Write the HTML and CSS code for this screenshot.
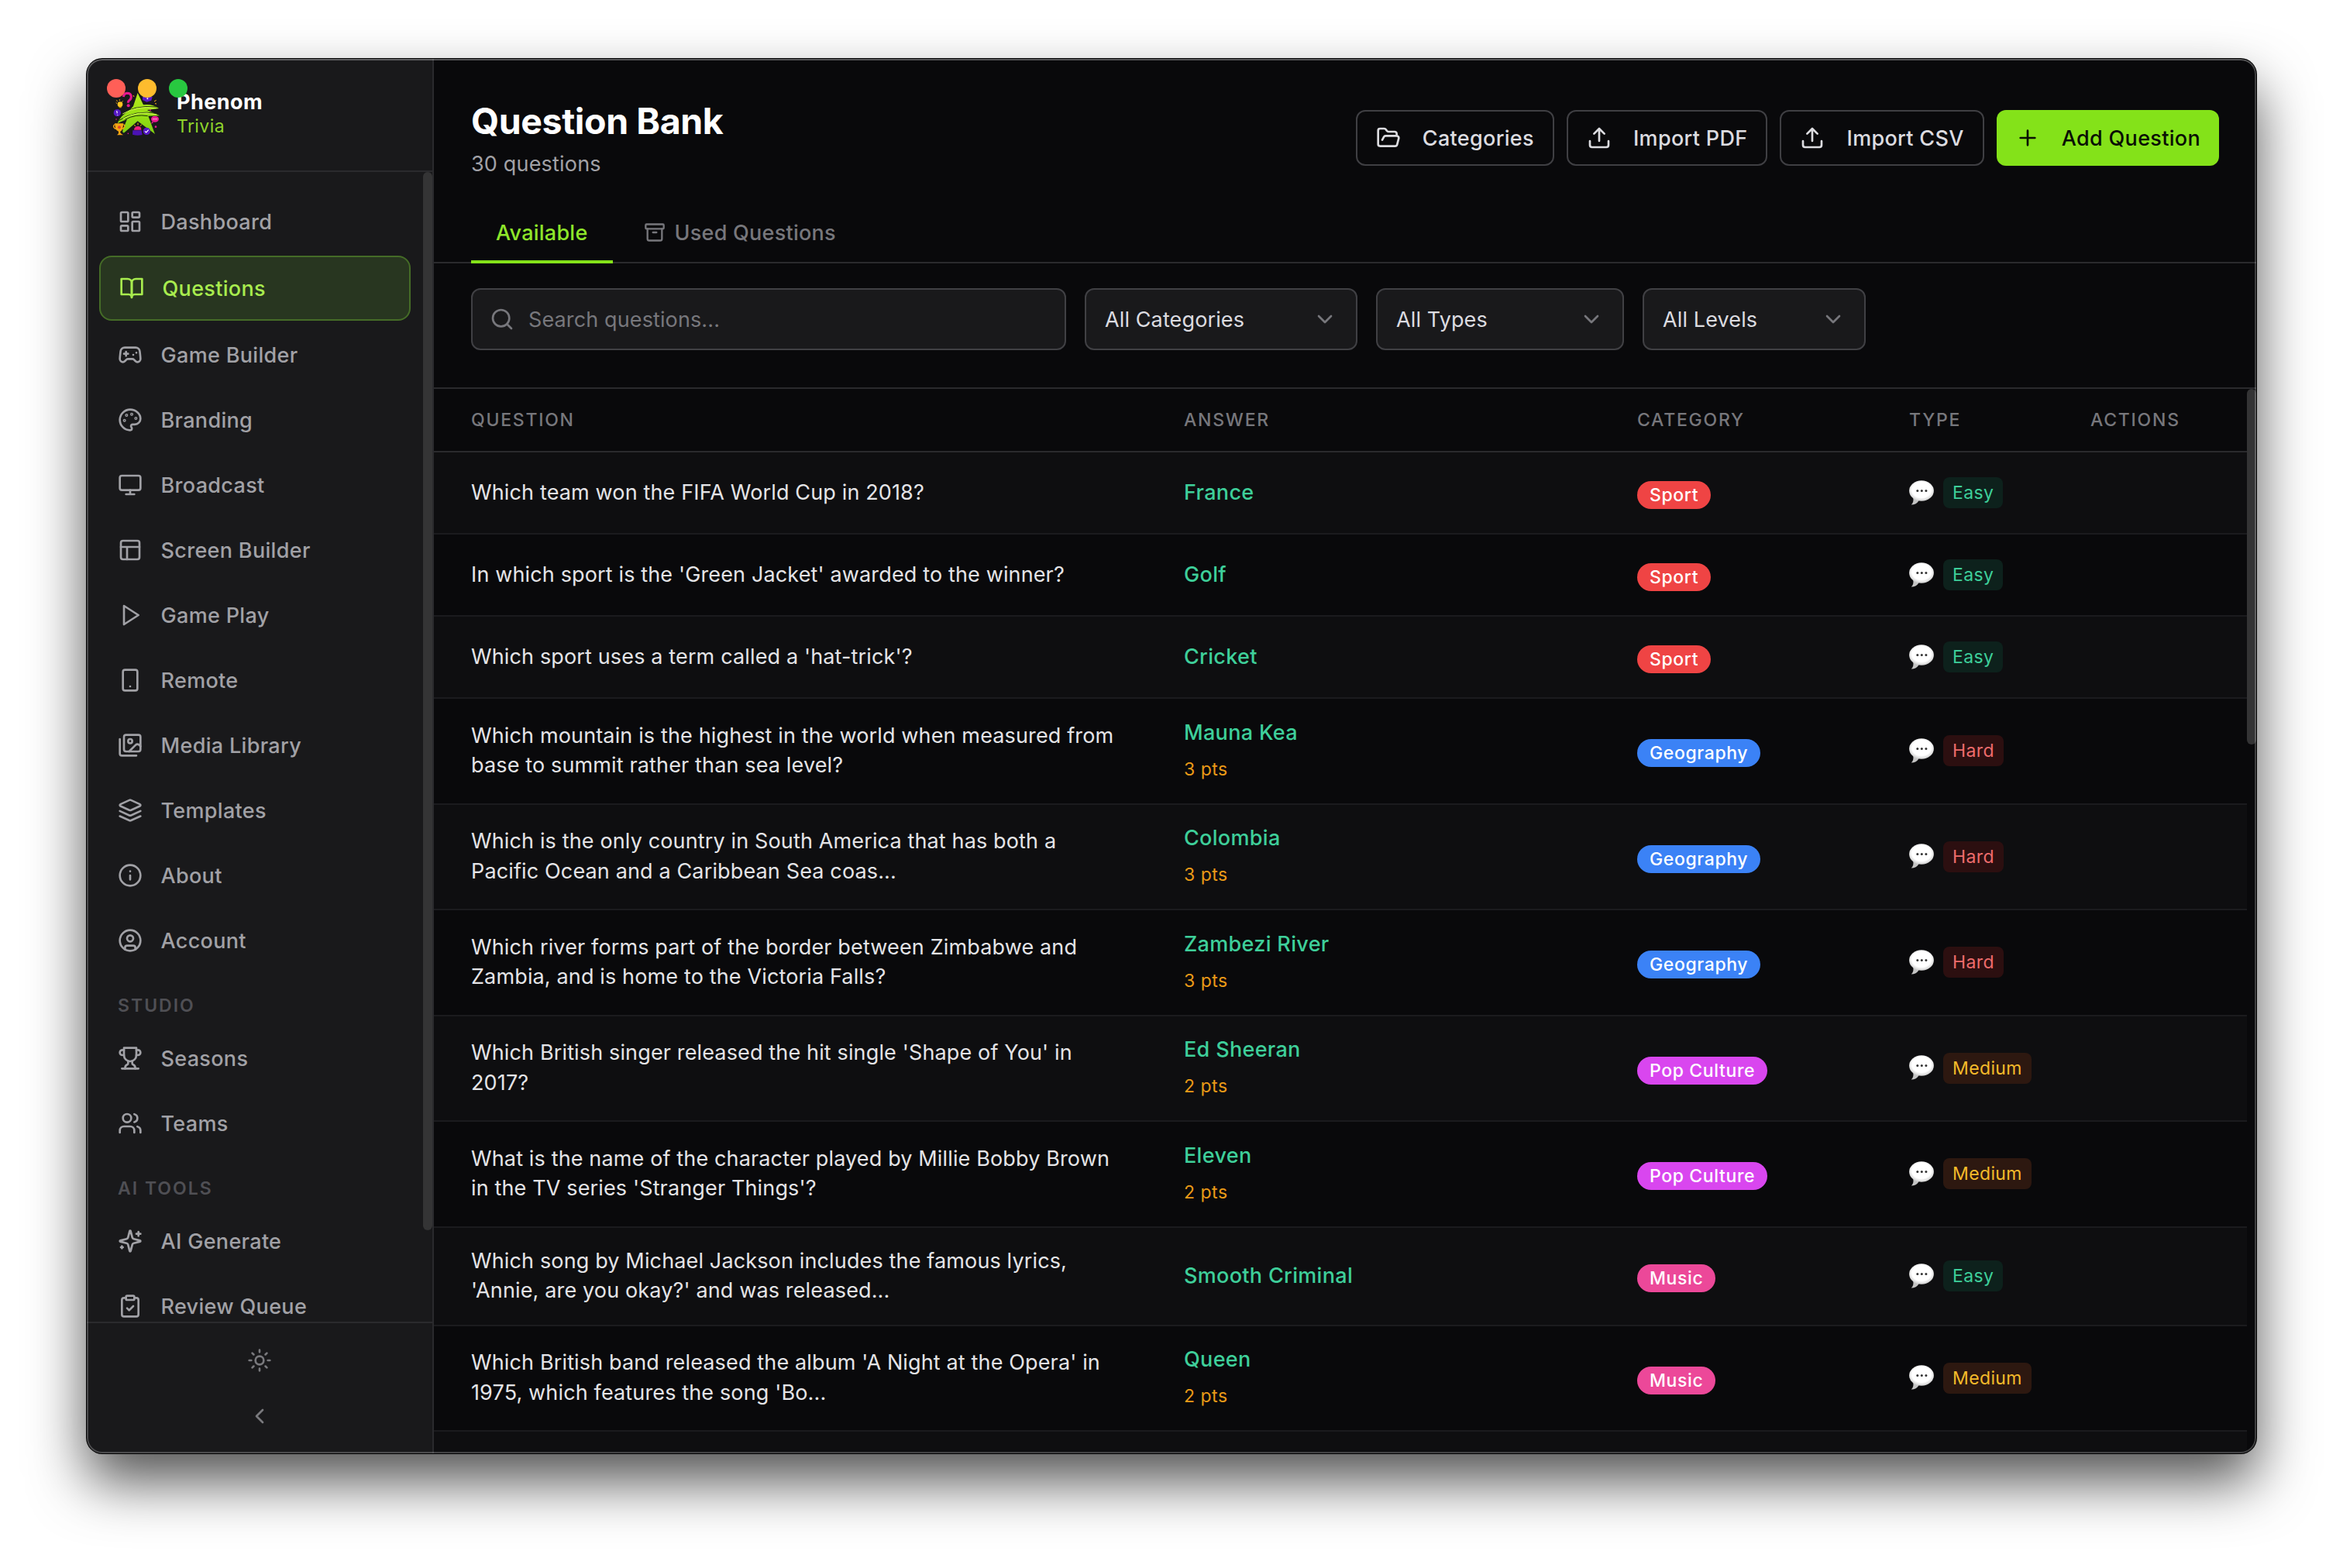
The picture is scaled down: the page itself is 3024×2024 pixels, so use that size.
FILE: index.html
```html
<!DOCTYPE html>
<html lang="en">
<head>
<meta charset="utf-8">
<title>Phenom Trivia – Question Bank</title>
<link rel="stylesheet" href="styles.css">
</head>
<body>
<svg class="sprite" aria-hidden="true">
  <symbol id="dashboard" viewBox="0 0 24 24"><rect x="3" y="3" width="7" height="9" rx="1"/><rect x="14" y="3" width="7" height="5" rx="1"/><rect x="14" y="12" width="7" height="9" rx="1"/><rect x="3" y="16" width="7" height="5" rx="1"/></symbol>
  <symbol id="book" viewBox="0 0 24 24"><path d="M2 3h6a4 4 0 0 1 4 4v14a3 3 0 0 0-3-3H2z"/><path d="M22 3h-6a4 4 0 0 0-4 4v14a3 3 0 0 1 3-3h7z"/></symbol>
  <symbol id="gamepad" viewBox="0 0 24 24"><path d="M6 11h4M8 9v4M15 12h.01M18 10h.01"/><path d="M17.32 5H6.68a4 4 0 0 0-3.978 3.59c-.006.052-.01.101-.017.152C2.604 9.416 2 14.456 2 16a3 3 0 0 0 3 3c1 0 1.5-.5 2-1l1.414-1.414A2 2 0 0 1 9.828 16h4.344a2 2 0 0 1 1.414.586L17 18c.5.5 1 1 2 1a3 3 0 0 0 3-3c0-1.545-.604-6.584-.685-7.258-.007-.05-.011-.1-.017-.151A4 4 0 0 0 17.32 5z"/></symbol>
  <symbol id="palette" viewBox="0 0 24 24"><circle cx="13.5" cy="6.5" r=".5"/><circle cx="17.5" cy="10.5" r=".5"/><circle cx="8.5" cy="7.5" r=".5"/><circle cx="6.5" cy="12.5" r=".5"/><path d="M12 2C6.5 2 2 6.5 2 12s4.5 10 10 10c.926 0 1.648-.746 1.648-1.688 0-.437-.18-.835-.437-1.125-.29-.289-.438-.652-.438-1.125a1.64 1.64 0 0 1 1.668-1.668h1.996c3.051 0 5.555-2.503 5.555-5.554C21.965 6.012 17.461 2 12 2z"/></symbol>
  <symbol id="monitor" viewBox="0 0 24 24"><rect x="2" y="3" width="20" height="14" rx="2"/><path d="M8 21h8M12 17v4"/></symbol>
  <symbol id="layout" viewBox="0 0 24 24"><rect x="3" y="3" width="18" height="18" rx="2"/><path d="M3 9h18M9 21V9"/></symbol>
  <symbol id="play" viewBox="0 0 24 24"><path d="M6 3l14 9-14 9z"/></symbol>
  <symbol id="phone" viewBox="0 0 24 24"><rect x="5" y="2" width="14" height="20" rx="2"/><path d="M12 18h.01"/></symbol>
  <symbol id="images" viewBox="0 0 24 24"><path d="M18 22H4a2 2 0 0 1-2-2V6"/><path d="m22 13-1.296-1.296a2.41 2.41 0 0 0-3.408 0L11 18"/><circle cx="12" cy="8" r="2"/><rect x="6" y="2" width="16" height="16" rx="2"/></symbol>
  <symbol id="layers" viewBox="0 0 24 24"><path d="m12.83 2.18a2 2 0 0 0-1.66 0L2.6 6.08a1 1 0 0 0 0 1.83l8.58 3.91a2 2 0 0 0 1.66 0l8.58-3.9a1 1 0 0 0 0-1.83Z"/><path d="m22 17.65-9.17 4.16a2 2 0 0 1-1.66 0L2 17.65"/><path d="m22 12.65-9.17 4.16a2 2 0 0 1-1.66 0L2 12.65"/></symbol>
  <symbol id="info" viewBox="0 0 24 24"><circle cx="12" cy="12" r="10"/><path d="M12 16v-4M12 8h.01"/></symbol>
  <symbol id="user" viewBox="0 0 24 24"><circle cx="12" cy="12" r="10"/><circle cx="12" cy="10" r="3"/><path d="M7 20.662V19a2 2 0 0 1 2-2h6a2 2 0 0 1 2 2v1.662"/></symbol>
  <symbol id="trophy" viewBox="0 0 24 24"><path d="M6 9H4.5a2.5 2.5 0 0 1 0-5H6M18 9h1.5a2.5 2.5 0 0 0 0-5H18M4 22h16"/><path d="M10 14.66V17c0 .55-.47.98-.97 1.21C7.85 18.75 7 20.24 7 22M14 14.66V17c0 .55.47.98.97 1.21C16.15 18.75 17 20.24 17 22"/><path d="M18 2H6v7a6 6 0 0 0 12 0V2Z"/></symbol>
  <symbol id="users" viewBox="0 0 24 24"><path d="M16 21v-2a4 4 0 0 0-4-4H6a4 4 0 0 0-4 4v2"/><circle cx="9" cy="7" r="4"/><path d="M22 21v-2a4 4 0 0 0-3-3.87M16 3.13a4 4 0 0 1 0 7.75"/></symbol>
  <symbol id="sparkles" viewBox="0 0 24 24"><path d="M9.937 15.5A2 2 0 0 0 8.5 14.063l-6.135-1.582a.5.5 0 0 1 0-.962L8.5 9.936A2 2 0 0 0 9.937 8.5l1.582-6.135a.5.5 0 0 1 .963 0L14.063 8.5A2 2 0 0 0 15.5 9.937l6.135 1.581a.5.5 0 0 1 0 .964L15.5 14.063a2 2 0 0 0-1.437 1.437l-1.582 6.135a.5.5 0 0 1-.963 0z"/><path d="M20 3v4M22 5h-4M4 17v2M5 18H3"/></symbol>
  <symbol id="clipboard" viewBox="0 0 24 24"><rect x="8" y="2" width="8" height="4" rx="1"/><path d="M16 4h2a2 2 0 0 1 2 2v14a2 2 0 0 1-2 2H6a2 2 0 0 1-2-2V6a2 2 0 0 1 2-2h2M9 14l2 2 4-4"/></symbol>
  <symbol id="sun" viewBox="0 0 24 24"><circle cx="12" cy="12" r="4"/><path d="M12 2v2M12 20v2M4.93 4.93l1.41 1.41M17.66 17.66l1.41 1.41M2 12h2M20 12h2M6.34 17.66l-1.41 1.41M19.07 4.93l-1.41 1.41"/></symbol>
  <symbol id="left" viewBox="0 0 24 24"><path d="m15 18-6-6 6-6"/></symbol>
  <symbol id="down" viewBox="0 0 24 24"><path d="m6 9 6 6 6-6"/></symbol>
  <symbol id="folder" viewBox="0 0 24 24"><path d="m6 14 1.5-2.9A2 2 0 0 1 9.24 10H20a2 2 0 0 1 1.94 2.5l-1.54 6a2 2 0 0 1-1.95 1.5H4a2 2 0 0 1-2-2V5a2 2 0 0 1 2-2h3.9a2 2 0 0 1 1.69.9l.81 1.2a2 2 0 0 0 1.67.9H18a2 2 0 0 1 2 2v2"/></symbol>
  <symbol id="upload" viewBox="0 0 24 24"><path d="M21 15v4a2 2 0 0 1-2 2H5a2 2 0 0 1-2-2v-4M17 8l-5-5-5 5M12 3v12"/></symbol>
  <symbol id="plus" viewBox="0 0 24 24"><path d="M5 12h14M12 5v14"/></symbol>
  <symbol id="archive" viewBox="0 0 24 24"><rect x="2" y="3" width="20" height="5" rx="1"/><path d="M4 8v11a2 2 0 0 0 2 2h12a2 2 0 0 0 2-2V8M10 12h4"/></symbol>
  <symbol id="search" viewBox="0 0 24 24"><circle cx="11" cy="11" r="8"/><path d="m21 21-4.3-4.3"/></symbol>
  <radialGradient id="bubbleFill" cx="50%" cy="45%" r="55%"><stop offset=".7" stop-color="#fff"/><stop offset="1" stop-color="#cfcfcf"/></radialGradient>
  <symbol id="bubble" viewBox="0 0 32 33"><path d="M5 22c1 4 .5 7-2.2 9.6 4.5-.2 7.800-2 9.700-5.400z" fill="#c4c4c4" stroke="none"/><ellipse cx="16" cy="13.500" rx="15.900" ry="13.200" fill="url(#bubbleFill)" stroke="none"/><g fill="#333" stroke="none"><circle cx="10.800" cy="13.600" r="1.500"/><circle cx="16.300" cy="13.600" r="1.500"/><circle cx="21.900" cy="13.600" r="1.500"/></g></symbol>
  <linearGradient id="starFill" x1="0" y1="0" x2="0" y2="1"><stop offset="0" stop-color="#b6ee1c"/><stop offset="1" stop-color="#7ed010"/></linearGradient>
</svg>

<div class="window">
  <div class="lights"><i class="red"></i><i class="yellow"></i><i class="green"></i></div>

  <aside class="sidebar">
    <div class="brand">
      <svg class="logo" viewBox="165 175 186 174">
        <path d="M208 196q2-13 14-14 15 0 16 13 0 10-8 15-4 3-4 9" fill="none" stroke="#e5178f" stroke-width="9"/><circle cx="227" cy="230" r="6" fill="#e5178f"/>
        <circle cx="195" cy="225" r="10" fill="#ffc51f"/><path d="M191 234h9v5h-9z" fill="#c98a10"/>
        <path d="M179 218l4 4M181 209l4 5M193 206v5M206 212l-4 4M246 190l3 6M327 214l8-5M330 222l6 1M250 304l4 6M264 297v8M278 303l-4 6" stroke="#ffb21a" stroke-width="3"/>
        <path d="M282 196h38l-4 14-18 6-16-8z" fill="#5a17c9"/><circle cx="301" cy="203" r="3" fill="#fff"/>
        <circle cx="184" cy="258" r="14" fill="#5418c4"/><path d="M182 250l2 10M185 265v2" stroke="#fff" stroke-width="3.500"/>
        <path d="M263 181l22 46q34-5 60 14l-46 6 49 22-44 1 26 70-67-50-52 45q-11 2-3-18l14-34q-22 8-37 16 10-30 45-49l16-18z" fill="url(#starFill)"/>
        <path d="M195 268q50-42 142-33M190 288q64-44 152-27M214 284q40-22 88-14" fill="none" stroke="#1c2f08" stroke-width="3"/>
        <path d="M205 262q56-34 130-22M206 281q60-34 130-16" fill="none" stroke="#d3f957" stroke-width="3"/>
        <ellipse cx="330" cy="282" rx="15" ry="12" fill="#ec1a93"/><circle cx="324" cy="282" r="2" fill="#fff"/><circle cx="330" cy="282" r="2" fill="#fff"/><circle cx="336" cy="282" r="2" fill="#fff"/>
        <path d="M319 292l-4 9 10-6z" fill="#ec1a93"/>
        <path d="M174 299h34l-3 20q-4 9-10 12l3 7 9 6h-24l6-6v-8q-9-3-12-12z" fill="#f5a514"/><path d="M175 303q-8 4-4 11t9 6M208 303q8 4 3 11t-8 6" fill="none" stroke="#f5a514" stroke-width="4"/><circle cx="192" cy="314" r="6" fill="#e0452a"/>
        <path d="M249 324q1-14 15-14t13 14z" fill="#f0207f"/><path d="M244 326h34l3 17q-20 5-38-1z" fill="#4b12b5"/>
        <circle cx="298" cy="329" r="14" fill="#5418c4"/><path d="M291 329l5 5 9-10" fill="none" stroke="#fff" stroke-width="3.500"/>
        <g fill="#e5178f"><circle cx="312" cy="247" r="3"/><circle cx="333" cy="312" r="4"/><circle cx="226" cy="338" r="2.500"/><circle cx="180" cy="283" r="2.500"/></g>
      </svg>
      <div class="brand-text"><div class="brand-name">Phenom</div><div class="brand-sub">Trivia</div></div>
    </div>

    <div class="nav-area">
      <nav class="nav">
        <a class="item"><svg class="icon"><use href="#dashboard"/></svg>Dashboard</a>
        <a class="item active"><svg class="icon"><use href="#book"/></svg>Questions</a>
        <a class="item"><svg class="icon"><use href="#gamepad"/></svg>Game Builder</a>
        <a class="item"><svg class="icon"><use href="#palette"/></svg>Branding</a>
        <a class="item"><svg class="icon"><use href="#monitor"/></svg>Broadcast</a>
        <a class="item"><svg class="icon"><use href="#layout"/></svg>Screen Builder</a>
        <a class="item"><svg class="icon"><use href="#play"/></svg>Game Play</a>
        <a class="item"><svg class="icon"><use href="#phone"/></svg>Remote</a>
        <a class="item"><svg class="icon"><use href="#images"/></svg>Media Library</a>
        <a class="item"><svg class="icon"><use href="#layers"/></svg>Templates</a>
        <a class="item"><svg class="icon"><use href="#info"/></svg>About</a>
        <a class="item"><svg class="icon"><use href="#user"/></svg>Account</a>
        <div class="section">STUDIO</div>
        <a class="item"><svg class="icon"><use href="#trophy"/></svg>Seasons</a>
        <a class="item"><svg class="icon"><use href="#users"/></svg>Teams</a>
        <div class="section">AI TOOLS</div>
        <a class="item"><svg class="icon"><use href="#sparkles"/></svg>AI Generate</a>
        <a class="item"><svg class="icon"><use href="#clipboard"/></svg>Review Queue</a>
      </nav>
      <div class="track"><div class="thumb nav-thumb"></div></div>
    </div>

    <div class="side-foot">
      <svg class="icon"><use href="#sun"/></svg>
      <svg class="icon"><use href="#left"/></svg>
    </div>
  </aside>

  <main class="main">
    <header class="head">
      <div>
        <h1 class="title">Question Bank</h1>
        <p class="count">30 questions</p>
      </div>
      <div class="actions">
        <button class="btn"><svg class="icon"><use href="#folder"/></svg>Categories</button>
        <button class="btn"><svg class="icon"><use href="#upload"/></svg>Import PDF</button>
        <button class="btn"><svg class="icon"><use href="#upload"/></svg>Import CSV</button>
        <button class="btn primary"><svg class="icon"><use href="#plus"/></svg>Add Question</button>
      </div>
    </header>

    <div class="tabs">
      <div class="tab selected">Available</div>
      <div class="tab"><svg class="icon small"><use href="#archive"/></svg>Used Questions</div>
    </div>

    <div class="filters">
      <div class="search"><svg class="icon"><use href="#search"/></svg>Search questions...</div>
      <div class="select w-cat">All Categories<svg class="icon"><use href="#down"/></svg></div>
      <div class="select w-type">All Types<svg class="icon"><use href="#down"/></svg></div>
      <div class="select w-level">All Levels<svg class="icon"><use href="#down"/></svg></div>
    </div>

    <div class="table-area">
      <div class="table">
        <div class="row thead"><div>QUESTION</div><div>ANSWER</div><div>CATEGORY</div><div>TYPE</div><div>ACTIONS</div></div>
        <div class="row one"><div class="q">Which team won the FIFA World Cup in 2018?</div><div class="a">France</div><div><span class="pill sport">Sport</span></div><div class="type"><svg class="bubble"><use href="#bubble"/></svg><span class="badge easy">Easy</span></div></div>
        <div class="row one"><div class="q">In which sport is the 'Green Jacket' awarded to the winner?</div><div class="a">Golf</div><div><span class="pill sport">Sport</span></div><div class="type"><svg class="bubble"><use href="#bubble"/></svg><span class="badge easy">Easy</span></div></div>
        <div class="row one"><div class="q">Which sport uses a term called a 'hat-trick'?</div><div class="a">Cricket</div><div><span class="pill sport">Sport</span></div><div class="type"><svg class="bubble"><use href="#bubble"/></svg><span class="badge easy">Easy</span></div></div>
        <div class="row"><div class="q">Which mountain is the highest in the world when measured from<br>base to summit rather than sea level?</div><div class="a">Mauna Kea<div class="pts">3 pts</div></div><div><span class="pill geo">Geography</span></div><div class="type"><svg class="bubble"><use href="#bubble"/></svg><span class="badge hard">Hard</span></div></div>
        <div class="row"><div class="q">Which is the only country in South America that has both a<br>Pacific Ocean and a Caribbean Sea coas...</div><div class="a">Colombia<div class="pts">3 pts</div></div><div><span class="pill geo">Geography</span></div><div class="type"><svg class="bubble"><use href="#bubble"/></svg><span class="badge hard">Hard</span></div></div>
        <div class="row"><div class="q">Which river forms part of the border between Zimbabwe and<br>Zambia, and is home to the Victoria Falls?</div><div class="a">Zambezi River<div class="pts">3 pts</div></div><div><span class="pill geo">Geography</span></div><div class="type"><svg class="bubble"><use href="#bubble"/></svg><span class="badge hard">Hard</span></div></div>
        <div class="row"><div class="q">Which British singer released the hit single 'Shape of You' in<br>2017?</div><div class="a">Ed Sheeran<div class="pts">2 pts</div></div><div><span class="pill pop">Pop Culture</span></div><div class="type"><svg class="bubble"><use href="#bubble"/></svg><span class="badge medium">Medium</span></div></div>
        <div class="row"><div class="q">What is the name of the character played by Millie Bobby Brown<br>in the TV series 'Stranger Things'?</div><div class="a">Eleven<div class="pts">2 pts</div></div><div><span class="pill pop">Pop Culture</span></div><div class="type"><svg class="bubble"><use href="#bubble"/></svg><span class="badge medium">Medium</span></div></div>
        <div class="row two"><div class="q">Which song by Michael Jackson includes the famous lyrics,<br>'Annie, are you okay?' and was released...</div><div class="a">Smooth Criminal</div><div><span class="pill music">Music</span></div><div class="type"><svg class="bubble"><use href="#bubble"/></svg><span class="badge easy">Easy</span></div></div>
        <div class="row"><div class="q">Which British band released the album 'A Night at the Opera' in<br>1975, which features the song 'Bo...</div><div class="a">Queen<div class="pts">2 pts</div></div><div><span class="pill music">Music</span></div><div class="type"><svg class="bubble"><use href="#bubble"/></svg><span class="badge medium">Medium</span></div></div>
        <div class="row"></div>
      </div>
      <div class="track"><div class="thumb table-thumb"></div></div>
    </div>
  </main>
</div>
</body>
</html>
```
FILE: styles.css
```css
* { box-sizing: border-box; }

body {
  margin: 0;
  width: 3024px;
  height: 2024px;
  padding: 76px 112px 148px;
  overflow: hidden;
  background: #fff;
  font-family: Inter, "Liberation Sans", sans-serif;
  font-size: 27px;
  color: #e4e4e7;
}

.sprite { position: absolute; width: 0; height: 0; }

.window {
  position: relative;
  display: flex;
  width: 2800px;
  height: 1800px;
  border-radius: 20px;
  overflow: hidden;
  background: #09090b;
  box-shadow: 0 0 0 1px #000, 0 36px 72px rgba(0, 0, 0, .68);
}

/* light rim that lies over the window's content */
.window::after {
  content: "";
  position: absolute;
  inset: 0;
  border-radius: 20px;
  box-shadow: inset 0 0 0 2px rgba(255, 255, 255, .22), inset 0 2px 0 rgba(255, 255, 255, .12);
  pointer-events: none;
}

.lights { position: absolute; left: 26px; top: 26px; display: flex; gap: 16px; z-index: 1; }
.lights i { width: 24px; height: 24px; border-radius: 50%; }
.red { background: #ff5f57; }
.yellow { background: #febc2e; }
.green { background: #28c840; }

.icon {
  width: 32px;
  height: 32px;
  flex: none;
  fill: none;
  stroke: currentColor;
  stroke-width: 2;
  stroke-linecap: round;
  stroke-linejoin: round;
}
.icon.small { width: 28px; height: 28px; }

/* sidebar */
.sidebar {
  width: 448px;
  flex: none;
  display: flex;
  flex-direction: column;
  background: #19191b;
  border-right: 2px solid #2a2a2d;
}
.brand {
  display: flex;
  align-items: flex-start;
  gap: 21px;
  height: 146px;
  padding: 40px 0 0 33px;
  border-bottom: 2px solid #2a2a2d;
}
.logo { width: 62px; height: 58px; margin-top: 2px; }
.brand-name { font-weight: 700; line-height: 32px; color: #fff; letter-spacing: .45px; }
.brand-sub { font-size: 23px; line-height: 30px; color: #8ed32b; letter-spacing: .4px; }

.nav-area { display: flex; flex: 1; min-height: 0; overflow: hidden; }
.nav { flex: 1; padding: 24px 16px; }
.item {
  display: flex;
  align-items: center;
  gap: 23.5px;
  height: 80px;
  margin-bottom: 4px;
  padding: 0 24px;
  font-weight: 500;
  letter-spacing: .32px;
  color: #a1a1a6;
  white-space: nowrap;
}
.item.active {
  height: 84px;
  border: 2px solid #456c27;
  border-radius: 16px;
  background: #283620;
  color: #a8ec4e;
}
.section {
  height: 68px;
  padding: 24px 24px 0;
  font-size: 23px;
  font-weight: 600;
  line-height: 32px;
  letter-spacing: 2px;
  color: #4f4f54;
}

.track { width: 12px; flex: none; }
.thumb { width: 12px; border-radius: 6px; background: #343435; }
.nav-thumb { height: 1366px; }
.table-thumb { height: 459px; }

.side-foot {
  display: flex;
  flex-direction: column;
  align-items: center;
  gap: 40px;
  height: 170px;
  flex: none;
  padding-top: 32px;
  border-top: 2px solid #2a2a2d;
  color: #79797d;
}

/* main column */
.main { flex: 1; min-width: 0; display: flex; flex-direction: column; }
.head {
  display: flex;
  align-items: center;
  justify-content: space-between;
  padding: 48px 48px 32px;
}
.title { margin: 0; font-size: 46.5px; line-height: 64px; font-weight: 700; letter-spacing: -.4px; color: #fff; }
.count { margin: 4px 0 0; line-height: 40px; letter-spacing: .18px; color: #a1a1a6; }

.actions { display: flex; gap: 16px; }
.btn {
  display: flex;
  align-items: center;
  gap: 28px;
  height: 72px;
  padding: 0 24px;
  border: 2px solid #3f3f43;
  border-radius: 12px;
  background: none;
  color: #dcdce0;
  font: 500 27px Inter, "Liberation Sans", sans-serif;
  letter-spacing: .32px;
  white-space: nowrap;
}
.btn.primary { border: 0; background: #84e219; color: #0a0f05; }

.tabs { display: flex; gap: 8px; height: 76px; padding: 0 48px; border-bottom: 2px solid #2a2a2d; }
.tab {
  display: flex;
  align-items: center;
  gap: 12px;
  height: 76px;
  padding: 0 32px;
  border-bottom: 4px solid transparent;
  font-weight: 500;
  letter-spacing: .25px;
  color: #77777c;
}
.tab.selected { border-color: #84e219; color: #8ee62a; }

.filters { display: flex; gap: 24px; padding: 32px 48px 48px; }
.search, .select {
  display: flex;
  align-items: center;
  height: 80px;
  border: 2px solid #404044;
  border-radius: 12px;
  background: #19191b;
  letter-spacing: .12px;
}
.search { width: 768px; gap: 18px; padding: 0 22px; color: #77777c; }
.select { justify-content: space-between; padding: 0 24px; color: #dcdce0; }
.select .icon { color: #77777c; }
.w-cat { width: 352px; }
.w-type { width: 320px; }
.w-level { width: 288px; }

/* question table */
.table-area { display: flex; flex: 1; min-height: 0; border-top: 2px solid #2a2a2d; overflow: hidden; }
.table { flex: 1; }
.row {
  display: grid;
  grid-template-columns: 920px 585px 351px 234px 1fr;
  align-items: center;
  height: 136.5px;
  padding-left: 48px;
  border-bottom: 2px solid #1b1b1e;
}
.row:nth-child(even) { background: #0e0e10; }
.row.one { height: 106px; }
.row.two { height: 127px; }
.row.thead {
  height: 82px;
  border-color: #2a2a2d;
  font-size: 23px;
  font-weight: 500;
  letter-spacing: 1.75px;
  color: #77777c;
}
.q { line-height: 38.5px; letter-spacing: .14px; white-space: nowrap; }
.a { line-height: 40px; font-weight: 500; letter-spacing: .32px; color: #3ecf9a; }
.pts { margin-top: 8px; font-size: 23px; font-weight: 400; line-height: 39px; letter-spacing: .5px; color: #ea9a17; }

.pill {
  display: inline-flex;
  align-items: center;
  height: 36px;
  margin-top: 6px;
  padding: 0 16px;
  border-radius: 18px;
  font-size: 23px;
  font-weight: 500;
  letter-spacing: .62px;
  color: #fff;
  vertical-align: middle;
}
.sport { background: #ef4444; }
.geo { background: #3b82f6; }
.pop { background: #d946ef; }
.music { background: #ec4899; }

.type { display: flex; align-items: center; gap: 12px; }
.bubble { width: 32px; height: 33px; }
.badge {
  display: flex;
  align-items: center;
  height: 40px;
  padding: 0 12px;
  border-radius: 8px;
  font-size: 23px;
  letter-spacing: .38px;
}
.easy { background: #0d211c; color: #3ecf9a; }
.hard { background: #2c0f10; color: #ee6c6c; }
.medium { background: #2d1810; color: #f5bb2a; }
```
